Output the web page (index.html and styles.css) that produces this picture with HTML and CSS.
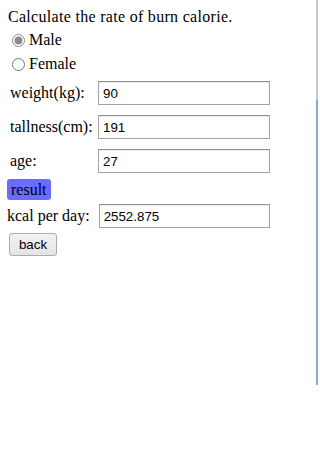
FILE: index.html
```html
<!DOCTYPE html>
<html lang="en">
<head>
    <meta charset="UTF-8">
    <meta name="viewport" content="width=device-width, initial-scale=1.0">
    <title>Burn Calorie</title>
    <link rel="stylesheet" href="styles.css">
</head>
<body>
    <div class="page">
        <div class="content">
            <p class="title">Calculate the rate of burn calorie.</p>
            <label class="choice"><input type="radio" name="sex" value="male" checked> Male</label>
            <label class="choice"><input type="radio" name="sex" value="female"> Female</label>
            <div class="fields">
                <label for="weight">weight(kg):</label>
                <input type="text" id="weight" value="90">
                <label for="tallness">tallness(cm):</label>
                <input type="text" id="tallness" value="191">
                <label for="age">age:</label>
                <input type="text" id="age" value="27">
            </div>
            <button type="button" class="result">result</button>
            <div class="kcal">
                <label for="kcal">kcal per day:</label>
                <input type="text" id="kcal" value="2552.875">
            </div>
            <button type="button" class="back">back</button>
        </div>
        <div class="edge"></div>
    </div>
</body>
</html>
```

FILE: styles.css
```css
/* Reset default styles */
* {
  box-sizing: border-box;
}

body {
  margin: 0;
  padding: 0;
  background-color: #fff;
  font-family: "Liberation Serif", "Times New Roman", serif;
  font-size: 16px;
  color: #000;
}

.page {
  display: flex;
  height: 385px;
}

.content {
  flex: 1;
  padding: 8px 0 0 8px;
}

.edge {
  width: 2px;
  margin-right: 2px;
  background: linear-gradient(#c4c7cb 0, #c4c7cb 100px, #8fa8c6 100px);
}

.title {
  margin: 0;
  line-height: 18px;
  letter-spacing: 0.3px;
}

.choice {
  display: flex;
  align-items: center;
  height: 24px;
  padding-left: 4px;
}

.choice:first-of-type {
  margin-top: 2px;
}

.choice input {
  width: 13px;
  height: 13px;
  margin: 0 4px 0 0;
  accent-color: #8a8a8a;
}

.fields {
  display: grid;
  grid-template-columns: 88px 172px;
  align-items: center;
  row-gap: 10px;
  padding-left: 2px;
  margin-top: 5px;
}

input[type="text"] {
  height: 24px;
  padding: 2px 4px;
  border: 1px solid #a3a3a3;
  border-top-color: #8f8f8f;
  font-family: "Liberation Sans", Arial, sans-serif;
  font-size: 13.33px;
  color: #000;
  box-shadow: inset 0 1px 1px rgba(0, 0, 0, 0.08);
}

.result {
  display: block;
  margin: 6px 0 0 -1px;
  height: 21px;
  padding: 0 4px;
  border: none;
  border-radius: 3px;
  background-color: #6b6bff;
  font-family: "Liberation Serif", "Times New Roman", serif;
  font-size: 16px;
  color: #000;
}

.kcal {
  display: flex;
  align-items: center;
  gap: 9px;
  margin-top: 4px;
  margin-left: -1px;
}

.kcal input {
  width: 171px;
}

.back {
  display: block;
  margin: 5px 0 0 1px;
  width: 48px;
  height: 23px;
  padding: 0;
  border: 1px solid #acacac;
  border-radius: 3px;
  background: linear-gradient(#f2f2f2, #e4e4e4);
  font-family: "Liberation Sans", Arial, sans-serif;
  font-size: 13.33px;
  color: #000;
}
```
